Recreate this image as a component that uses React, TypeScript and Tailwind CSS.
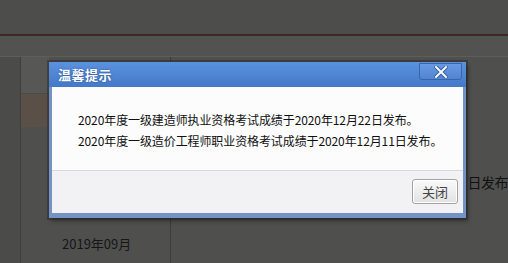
import React from 'react';

const cjk = { fontFamily: '"Noto Sans CJK SC", "Noto Sans", sans-serif' };

const CloseX = () => (
  <svg width="14" height="12" viewBox="0 0 14 12" aria-hidden="true">
    <path d="M2 1 L12 11 M12 1 L2 11" stroke="#3a5f9c" strokeWidth="4" strokeLinecap="square" />
    <path d="M2 1 L12 11 M12 1 L2 11" stroke="#f4f8ff" strokeWidth="2" strokeLinecap="square" />
  </svg>
);

const NoticeDialog = () => (
  <div
    className="absolute left-[49px] top-[62px] w-[417px] h-[156px] flex flex-col bg-[#7393c6] shadow-[0_0_0_2px_rgba(40,40,40,0.45),2px_3px_4px_rgba(0,0,0,0.4)]"
    style={cjk}
  >
    <div className="relative h-[25px] flex items-center px-[9px] bg-gradient-to-b from-[#5b92de] to-[#4479c9]">
      <span className="text-[13px] font-bold text-white tracking-[0.5px] [text-shadow:0_0_2px_#2a4c88]">
        温馨提示
      </span>
      <div className="absolute right-[4px] top-[1px] w-[43px] h-[17px] flex items-center justify-center rounded-b-[3px] border border-[#3a64a8] bg-gradient-to-b from-[#679ae2] to-[#5185d2]">
        <CloseX />
      </div>
    </div>
    <div className="flex-1 mx-[3px] mb-[5px] flex flex-col">
      <div className="h-[84px] bg-[#fcfcfd] border-b border-[#d6d9de] pl-[26px] pt-[22px] text-[12px] leading-[21px] text-[#101010] tracking-[-0.1px]">
        <p>2020年度一级建造师执业资格考试成绩于2020年12月22日发布。</p>
        <p>2020年度一级造价工程师职业资格考试成绩于2020年12月11日发布。</p>
      </div>
      <div className="flex-1 bg-[#f2f2f5] flex items-start justify-end pr-[5px] pt-[8px]">
        <button className="w-[46px] h-[25px] rounded-[3px] border border-[#a2a2a2] bg-gradient-to-b from-[#fafafa] to-[#e2e2e2] text-[13px] text-[#444] shadow-[inset_0_0_0_1px_#ffffff]">
          关闭
        </button>
      </div>
    </div>
  </div>
);

export default function App() {
  return (
    <div className="relative w-[508px] h-[263px] overflow-hidden bg-[#4f4f4e] flex flex-col" style={cjk}>
      <div className="h-[34px] bg-[#4d4d4c]" />
      <div className="h-[2px] bg-[#3f2627]" />
      <div className="h-[21px] bg-[#525251] border-b border-[#5d5d5c]" />
      <div className="flex-1 flex">
        <div className="w-[21px] border-r border-[#3e3e3d] bg-[#4b4b4a]" />
        <div className="w-[150px] flex flex-col border-r border-[#3c3c3b]">
          <div className="w-[28px] h-[37px] bg-[#575756] border-b border-[#4a4a49]" />
          <div className="w-[28px] h-[33px] bg-[#5b5048]" />
          <div className="flex-1" />
          <p className="pl-[41px] pb-[11px] text-[13px] leading-[16px] text-[#161616]">2019年09月</p>
        </div>
        <div className="flex-1 flex flex-col items-end pt-[116px]">
          <p className="text-[14px] leading-[18px] text-[#121212] tracking-[-0.5px]">日发布</p>
        </div>
      </div>
      <NoticeDialog />
    </div>
  );
}
